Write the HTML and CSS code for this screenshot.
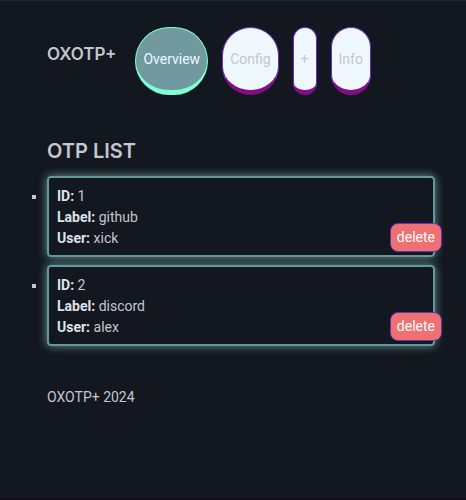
FILE: index.html
```html
<!DOCTYPE html>
<html lang="en">
<head>
<meta charset="utf-8">
<meta name="viewport" content="width=device-width, initial-scale=1">
<title>OXOTP+</title>
<link rel="stylesheet" href="styles.css">
</head>
<body>
<header class="header">
  <strong class="brand">OXOTP+</strong>
  <nav class="nav">
    <a class="tab tab-active" href="#overview" aria-current="page">Overview</a>
    <a class="tab" href="#config">Config</a>
    <a class="tab" href="#add">+</a>
    <a class="tab" href="#info">Info</a>
  </nav>
</header>
<main class="main">
  <h1 class="title">OTP LIST</h1>
  <ul class="list">
    <li class="card">
      <div><b>ID:</b> 1</div>
      <div><b>Label:</b> github</div>
      <div><b>User:</b> xick</div>
      <button class="delete" type="button">delete</button>
    </li>
    <li class="card">
      <div><b>ID:</b> 2</div>
      <div><b>Label:</b> discord</div>
      <div><b>User:</b> alex</div>
      <button class="delete" type="button">delete</button>
    </li>
  </ul>
</main>
<footer class="footer">OXOTP+ 2024</footer>
</body>
</html>
```

FILE: styles.css
```css
* {
  box-sizing: border-box;
}

body {
  margin: 0;
  min-height: 100vh;
  padding: 26px 31px 0 47px;
  border-top: 1px solid #20242d;
  border-bottom: 2px solid #100b17;
  background: #13171f;
  color: #c2c7d0;
  font: 14px/21px Roboto, "Liberation Sans", sans-serif;
}

.header {
  display: flex;
  align-items: flex-start;
  gap: 19px;
}

.brand {
  padding-top: 17px;
  font-family: Inter, "Liberation Sans", sans-serif;
  font-size: 17px;
  font-weight: 600;
}

.nav {
  display: flex;
  gap: 14px;
}

.tab {
  padding: 21px 7px 20px;
  border: 1px solid #6a2fbc;
  border-bottom: 5px solid #800f86;
  border-radius: 34px;
  background: aliceblue;
  color: #c2c7d0;
  text-decoration: none;
}

.tab-active {
  border-color: aquamarine;
  background: #709a9f;
  color: aliceblue;
}

.title {
  margin: 42px 0 11px;
  font-family: Inter, "Liberation Sans", sans-serif;
  font-size: 20px;
  line-height: 28px;
  font-weight: 600;
}

.list {
  display: grid;
  gap: 8px;
  margin: 0;
  padding: 0;
  list-style: square;
}

.card {
  position: relative;
  padding: 8px 8px 6px;
  border: 2px solid #669799;
  border-radius: 4px;
  box-shadow: 0 0 10px #669799;
}

.card b {
  font-weight: 700;
  color: #dfe3eb;
}

.delete {
  position: absolute;
  right: -9px;
  bottom: 3px;
  padding: 3px 6px;
  border: 1px solid #6a2fbc;
  border-radius: 8px;
  background: #ee7070;
  color: #fff;
  font: inherit;
}

.footer {
  padding-top: 41px;
}
```
